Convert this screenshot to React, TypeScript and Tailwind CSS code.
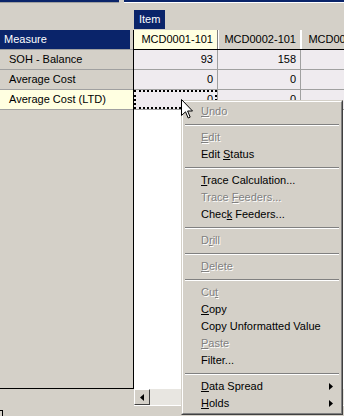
import React from "react";

type Item = {
    label: React.ReactNode;
    disabled?: boolean;
    submenu?: boolean;
    sep?: false;
};
type Sep = { sep: true };

// mnemonic helper: underline the char at index i
const m = (text: string, i: number) => (
    <>
        {text.slice(0, i)}
        <u className="underline-offset-[1px]">{text[i]}</u>
        {text.slice(i + 1)}
    </>
);

const menu: (Item | Sep)[] = [
    { label: m("Undo", 0), disabled: true },
    { sep: true },
    { label: m("Edit", 0), disabled: true },
    { label: m("Edit Status", 5) },
    { sep: true },
    { label: m("Trace Calculation...", 0) },
    { label: m("Trace Feeders...", 6), disabled: true },
    { label: m("Check Feeders...", 4) },
    { sep: true },
    { label: m("Drill", 1), disabled: true },
    { sep: true },
    { label: m("Delete", 0), disabled: true },
    { sep: true },
    { label: m("Cut", 2), disabled: true },
    { label: m("Copy", 0) },
    { label: "Copy Unformatted Value" },
    { label: m("Paste", 0), disabled: true },
    { label: "Filter..." },
    { sep: true },
    { label: m("Data Spread", 0), submenu: true },
    { label: m("Holds", 0), submenu: true },
];

const rows = [
    { name: "SOH - Balance", v: ["93", "158", ""], bg: "bg-[#d4d0c8]" },
    { name: "Average Cost", v: ["0", "0", ""], bg: "bg-[#d4d0c8]" },
    { name: "Average Cost (LTD)", v: ["0", "0", ""], bg: "bg-[#ffffe1]" },
];

function ContextMenu() {
    return (
        <div className="absolute left-[181px] top-[100px] w-[162px] border border-t-[#d4d0c8] border-l-[#d4d0c8] border-r-[#404040] border-b-[#404040]">
            <div className="border border-t-white border-l-white border-r-[#808080] border-b-[#808080] bg-[#d4d0c8] p-[1px]">
                {menu.map((it, idx) =>
                    it.sep ? (
                        <div key={idx} className="h-[9px] flex flex-col justify-center px-[1px]">
                            <div className="h-px bg-[#808080]" />
                            <div className="h-px bg-white" />
                        </div>
                    ) : (
                        <div
                            key={idx}
                            className={`h-[17px] flex items-center pl-[17px] pr-[7px] whitespace-nowrap ${it.disabled ? "text-[#808080] [text-shadow:1px_1px_0_#fff]" : "text-black"}`}
                        >
                            <span className="flex-1">{it.label}</span>
                            {it.submenu && (
                                <svg width="4" height="7" viewBox="0 0 4 7">
                                    <path d="M0 0 L4 3.5 L0 7 Z" fill="#000" />
                                </svg>
                            )}
                        </div>
                    )
                )}
            </div>
        </div>
    );
}

export default function App() {
    return (
        <div className="relative w-[344px] h-[416px] overflow-hidden bg-[#d4d0c8] font-['Liberation_Sans',Arial,sans-serif] text-[11px] leading-none text-black select-none">
            {/* top edit boxes, mostly scrolled off */}
            <div className="flex gap-[5px] h-[10px] items-start">
                <div className="w-[119px] h-[3px] bg-[#0a246a] border-b border-[#a0a0a0]" />
                <div className="flex-1 h-[3px] bg-[#0a246a] border-b border-white" />
            </div>

            {/* column dimension */}
            <div className="flex h-[20px] pl-[134px]">
                <div className="h-[19px] bg-[#0a246a] text-white flex items-center px-[5px]">Item</div>
            </div>

            <div className="flex items-start">
                {/* row headers */}
                <div className="w-[134px] h-[359px] flex flex-col border-r border-b border-black">
                    <div className="h-[20px] pr-[3px] border-b border-[#a0a0a0]">
                        <div className="h-[19px] bg-[#0a246a] text-white flex items-center pl-[4px]">Measure</div>
                    </div>
                    {rows.map(r => (
                        <div key={r.name} className={`h-[20px] ${r.bg} border-b border-[#a0a0a0] flex items-center pl-[9px]`}>
                            {r.name}
                        </div>
                    ))}
                    <div className="flex-1" />
                </div>

                {/* data grid */}
                <div className="flex-1 h-[376px] flex flex-col overflow-hidden">
                    <div className="flex h-[20px] border-b border-black shrink-0">
                        <div className="w-[84px] shrink-0 bg-[#ffffe1] border-r border-[#808080] flex items-center justify-end pr-[4px]">MCD0001-101</div>
                        <div className="w-[83px] shrink-0 border-l border-white border-r border-[#808080] flex items-center justify-end pr-[4px]">MCD0002-101</div>
                        <div className="w-[83px] shrink-0 border-l border-white flex items-center justify-end pr-[4px]">MCD0003-101</div>
                    </div>
                    {rows.map((r, ri) => (
                        <div key={r.name} className="flex h-[20px] shrink-0">
                            {r.v.map((v, ci) => (
                                <div
                                    key={ci}
                                    className={`relative shrink-0 ${ci === 0 ? "w-[84px]" : "w-[83px]"} bg-[#efebef] border-r border-b border-[#a0a0a0] flex items-center justify-end pr-[4px]`}
                                >
                                    {v}
                                    {ri === 2 && ci === 0 && (
                                        <div className="absolute inset-0 border-2 border-dotted border-black" />
                                    )}
                                </div>
                            ))}
                        </div>
                    ))}
                    <div className="flex-1 bg-white" />
                    {/* horizontal scrollbar */}
                    <div className="h-[18px] shrink-0 border-t border-[#d4d0c8] border-b border-white bg-[#e8e6e1] flex">
                        <div className="w-[16px] h-[16px] bg-[#d4d0c8] border border-t-white border-l-white border-r-[#404040] border-b-[#404040] flex items-center justify-center">
                            <svg width="4" height="7" viewBox="0 0 4 7">
                                <path d="M4 0 L0 3.5 L4 7 Z" fill="#000" />
                            </svg>
                        </div>
                    </div>
                </div>
            </div>

            {/* corner of a control below */}
            <div className="mt-[4px] w-[3px] h-[6px] border-t border-r border-black" />

            <ContextMenu />

            {/* mouse pointer */}
            <svg className="absolute left-[181px] top-[99px]" width="13" height="21" viewBox="0 0 13 21">
                <path d="M0.5 0.5 L0.5 16.5 L4.5 12.8 L7.2 19 L9.2 18.1 L6.6 12 L11.5 12 Z" fill="#fff" stroke="#000" strokeWidth="1" />
            </svg>
        </div>
    );
}
